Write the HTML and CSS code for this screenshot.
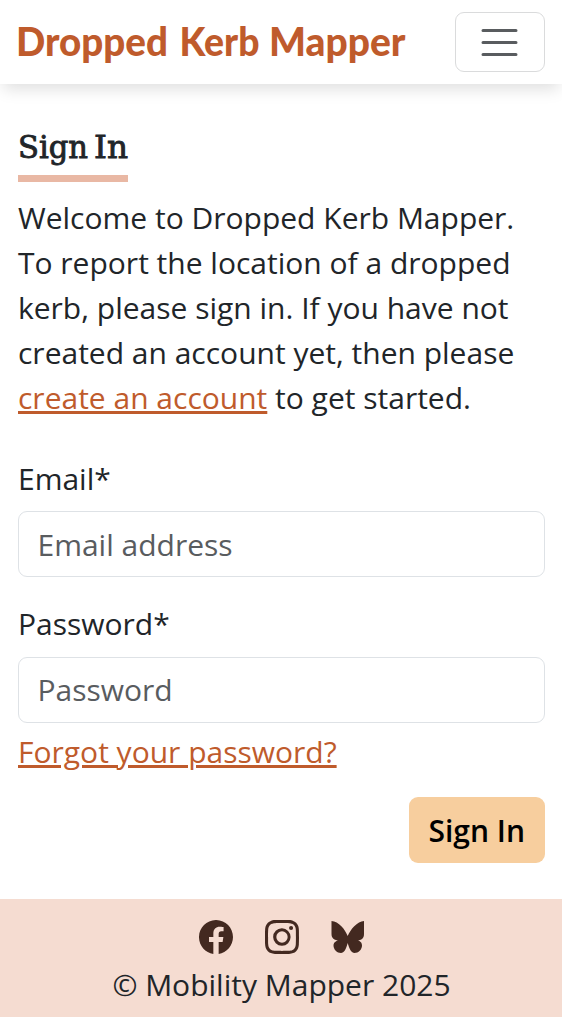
FILE: index.html
```html
<!DOCTYPE html>
<html lang="en">
<head>
<meta charset="utf-8">
<title>Sign In - Dropped Kerb Mapper</title>
<link rel="stylesheet" href="styles.css">
</head>
<body>
<header class="navbar">
  <a class="brand" href="#" aria-label="Dropped Kerb Mapper"><svg width="390" height="48"><g class="brand-text"><text x="-2" y="37" textLength="152" lengthAdjust="spacingAndGlyphs">Dropped</text><text x="161.500" y="37" textLength="80" lengthAdjust="spacingAndGlyphs">Kerb</text><text x="251" y="37" textLength="136.500" lengthAdjust="spacingAndGlyphs">Mapper</text></g></svg></a>
  <button class="toggler" type="button" aria-label="Toggle navigation">
    <svg width="45" height="45" viewBox="0 0 30 30"><path stroke="#212529" stroke-opacity=".75" stroke-linecap="round" stroke-miterlimit="10" stroke-width="2" d="M4 7h22M4 15h22M4 23h22"/></svg>
  </button>
</header>
<main class="content">
  <h1 class="title"><svg width="110" height="45"><g class="title-text"><text x="0" y="28" textLength="70" lengthAdjust="spacingAndGlyphs">Sign</text><text x="76" y="28" textLength="34" lengthAdjust="spacingAndGlyphs">In</text></g></svg></h1>
  <p class="intro">Welcome to Dropped Kerb Mapper.<br>To report the location of a dropped<br>kerb, please sign in. If you have not<br>created an account yet, then please<br><a class="link" href="#">create an account</a> to get started.</p>
  <form class="form">
    <div class="field">
      <label class="label" for="email">Email*</label>
      <input class="input" id="email" type="email" placeholder="Email address">
    </div>
    <div class="field">
      <label class="label" for="password">Password*</label>
      <input class="input" id="password" type="password" placeholder="Password">
    </div>
    <a class="link forgot" href="#">Forgot your password?</a>
    <button class="submit" type="button">Sign In</button>
  </form>
</main>
<footer class="footer">
  <div class="social">
    <svg class="icon" viewBox="0 0 16 16"><path d="M16 8.049c0-4.446-3.582-8.05-8-8.05C3.58 0-.002 3.603-.002 8.05c0 4.017 2.926 7.347 6.75 7.951v-5.625h-2.03V8.05H6.75V6.275c0-2.017 1.195-3.131 3.022-3.131.876 0 1.791.157 1.791.157v1.98h-1.009c-.993 0-1.303.621-1.303 1.258v1.51h2.218l-.354 2.326H9.25V16c3.824-.604 6.75-3.934 6.75-7.951"/></svg>
    <svg class="icon" viewBox="0 0 16 16"><path d="M8 0C5.829 0 5.556.01 4.703.048 3.85.088 3.269.222 2.76.42a3.9 3.9 0 0 0-1.417.923A3.9 3.9 0 0 0 .42 2.76C.222 3.268.087 3.85.048 4.7.01 5.555 0 5.827 0 8.001c0 2.172.01 2.444.048 3.297.04.852.174 1.433.372 1.942.205.526.478.972.923 1.417.444.445.89.719 1.416.923.51.198 1.09.333 1.942.372C5.555 15.99 5.827 16 8 16s2.444-.01 3.298-.048c.851-.04 1.434-.174 1.943-.372a3.9 3.9 0 0 0 1.416-.923c.445-.445.718-.891.923-1.417.197-.509.332-1.09.372-1.942C15.99 10.445 16 10.173 16 8s-.01-2.445-.048-3.299c-.04-.851-.175-1.433-.372-1.941a3.9 3.9 0 0 0-.923-1.417A3.9 3.9 0 0 0 13.24.42c-.51-.198-1.092-.333-1.943-.372C10.443.01 10.172 0 7.998 0zm-.717 1.442h.718c2.136 0 2.389.007 3.232.046.78.035 1.204.166 1.486.275.373.145.64.319.92.599s.453.546.598.92c.11.281.24.705.275 1.485.039.843.047 1.096.047 3.231s-.008 2.389-.047 3.232c-.035.78-.166 1.203-.275 1.485a2.5 2.5 0 0 1-.599.919c-.28.28-.546.453-.92.598-.28.11-.704.24-1.485.276-.843.038-1.096.047-3.232.047s-2.39-.009-3.233-.047c-.78-.036-1.203-.166-1.485-.276a2.5 2.5 0 0 1-.92-.598 2.5 2.5 0 0 1-.6-.92c-.109-.281-.24-.705-.275-1.485-.038-.843-.046-1.096-.046-3.233s.008-2.388.046-3.231c.036-.78.166-1.204.276-1.486.145-.373.319-.64.599-.92s.546-.453.92-.598c.282-.11.705-.24 1.485-.276.738-.034 1.024-.044 2.515-.045zm4.988 1.328a.96.96 0 1 0 0 1.920.96.96 0 0 0 0-1.920m-4.27 1.122a4.109 4.109 0 1 0 0 8.217 4.109 4.109 0 0 0 0-8.217m0 1.441a2.667 2.667 0 1 1 0 5.334 2.667 2.667 0 0 1 0-5.334"/></svg>
    <svg class="icon" viewBox="0 0 34 34"><path d="M.5 1C7.500 1 14.500 10 16.700 16C19 10 26.500 1 33 1V14C33 18 31 20.500 25.500 20.500C29 20.500 31 22.500 31 25.500C31 29.500 27.500 33 23.500 33C20.500 33 18.500 29.500 16.700 23C15 29.500 13 33 10 33C6 33 2.500 29.500 2.500 25.500C2.500 22.500 5 20.500 8.500 20.500C3 20.500 .5 18 .5 14Z"/></svg>
  </div>
  <div class="copyright">© Mobility Mapper 2025</div>
</footer>
</body>
</html>
```
FILE: styles.css
```css
* { box-sizing: border-box; }
html { background: #fff; }
body {
  margin: 0;
  font-family: "Open Sans", sans-serif;
  font-size: 30px;
  line-height: 45px;
  color: #212529;
}
.navbar {
  display: flex;
  justify-content: space-between;
  align-items: center;
  height: 84px;
  padding: 0 17.5px 0 18px;
  box-shadow: 0 8px 15px -3px rgba(0, 0, 0, .13);
  background: #fff;
}
.brand { display: flex; padding-top: 2px; }
.brand svg { overflow: visible; }
.brand-text {
  font-family: Lato, sans-serif;
  font-weight: 900;
  font-size: 39px;
  fill: #bf5b2c;
}
.toggler {
  display: flex;
  align-items: center;
  justify-content: center;
  width: 90px;
  height: 60px;
  padding: 0;
  background: #fff;
  border: 1.5px solid #dadbdc;
  border-radius: 9px;
}
.toggler svg { fill: none; }
.content { padding: 46px 17.5px 36px 18px; }
.title {
  width: 110px;
  height: 52px;
  margin: 0 0 13px;
  border-bottom: 7.5px solid #e9b8a4;
}
.title svg { display: block; overflow: visible; }
.title-text {
  font-family: "DejaVu Serif", serif;
  font-size: 32px;
  font-weight: 400;
  fill: #212529;
  stroke: #212529;
  stroke-width: .9px;
}
.intro { margin: 0 0 36px; white-space: nowrap; }
.link {
  color: #bf5b2c;
  text-decoration: underline;
}
.form { display: flex; flex-direction: column; }
.field { display: flex; flex-direction: column; gap: 9.5px; margin-bottom: 24.5px; }
.field:nth-child(2) { margin-bottom: 6px; gap: 10.5px; }
.input {
  width: 100%;
  height: 66px;
  padding: 9px 18.5px 8px;
  font: inherit;
  border: 1.5px solid #dee2e6;
  border-radius: 9px;
  background: #fff;
}
.field:nth-child(2) .input { padding: 8px 18.5px 9px; }
.input::placeholder { color: #595c5f; opacity: 1; }
.forgot { align-self: flex-start; }
.submit {
  align-self: flex-end;
  width: 135.5px;
  height: 66px;
  margin-top: 23.5px;
  padding: 0;
  border: 0;
  border-radius: 9px;
  background: #f7ce9e;
  color: #000;
  font: 600 30px/45px "Open Sans", sans-serif;
}
.footer {
  height: 118px;
  padding-top: 21px;
  background: #f5dcd1;
  text-align: center;
}
.social { display: flex; justify-content: center; gap: 32px; height: 34px; margin-bottom: 8px; padding-left: 1px; }
.icon { width: 34px; height: 34px; fill: #432920; }
.copyright { padding-left: 1px; }
```
